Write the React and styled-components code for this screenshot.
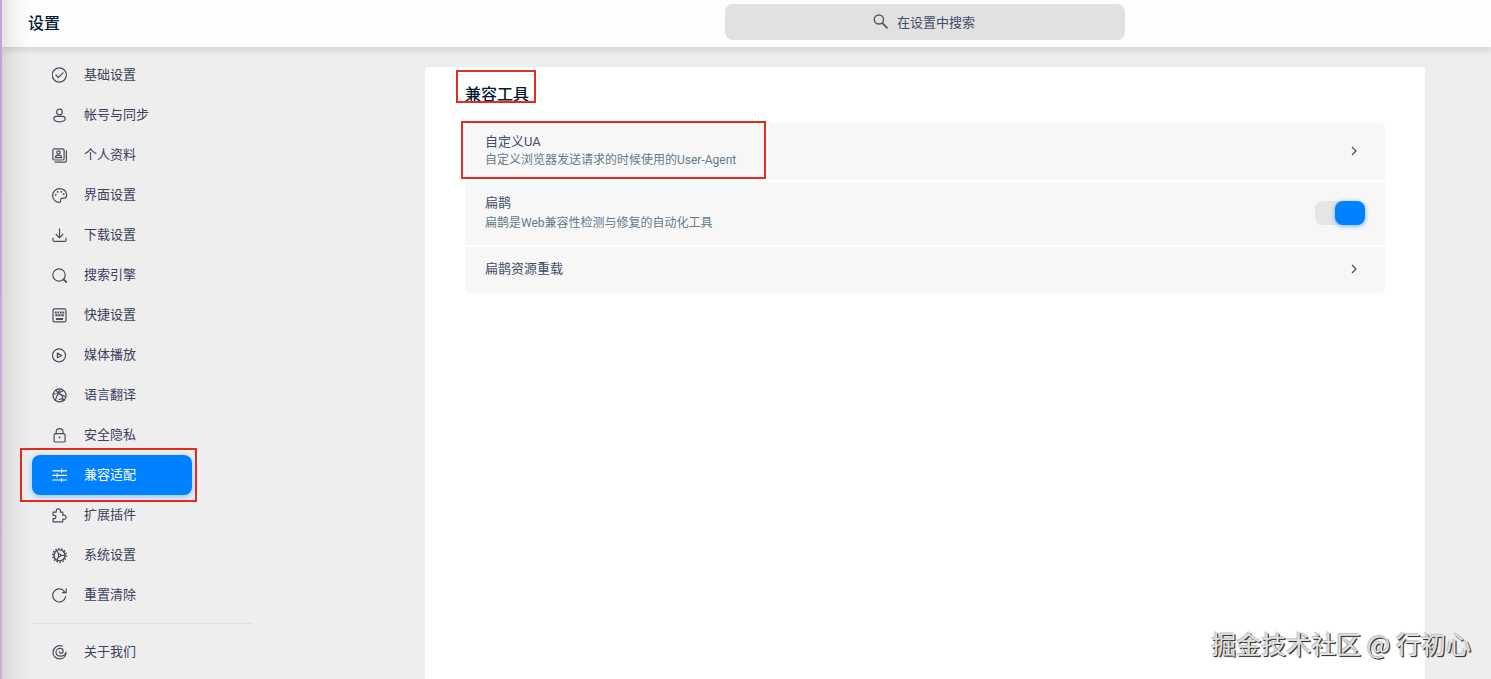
import React, { useState } from 'react'
import styled, { createGlobalStyle, ThemeProvider } from 'styled-components'

const theme = {
  fontFamily: 'Roboto, "Noto Sans CJK SC", sans-serif',
  colors: {
    page: '#eeeeee',
    header: '#fdfdfd',
    panel: '#ffffff',
    row: '#f7f7f7',
    search: '#e1e1e1',
    accent: '#0081ff',
    title: '#001a2e',
    text: '#414d68',
    nav: '#3b415b',
    icon: '#4a4e5c',
    hint: '#667a8a',
    mark: '#e32b20',
  },
}

const GlobalStyle = createGlobalStyle`
  * {
    box-sizing: border-box;
  }
  body {
    margin: 0;
    background-color: ${ theme.colors.page };
    font-family: ${ theme.fontFamily };
    font-size: 13px;
  }
  button, input {
    font-family: inherit;
    font-size: inherit;
  }
`

const StyledPage = styled.div`
  position: relative;
  display: flex;
  flex-direction: column;
  height: 100vh;
  overflow: hidden;
  border-left: 2px solid;
  border-image: linear-gradient( #c8a2da, #c9a6dc 50%, #d6abcd ) 1;
  &::before {
    content: '';
    position: absolute;
    z-index: 2;
    top: 0;
    bottom: 0;
    left: 0;
    width: 28px;
    background: linear-gradient( to right, rgba(0, 0, 0, 0.1), rgba(0, 0, 0, 0.04) 40%, transparent );
    pointer-events: none;
  }
`

const columns = `
  display: grid;
  grid-template-columns: 423px minmax(0, 1fr);
  padding-right: 66px;
`

const StyledHeader = styled.header`
  ${ columns }
  position: relative;
  z-index: 1;
  align-items: start;
  flex: none;
  height: 47px;
  background-color: ${ props => props.theme.colors.header };
  box-shadow: 0 4px 6px rgba(0, 0, 0, 0.1);
`

const StyledPageTitle = styled.h1`
  margin: 0;
  padding-left: 26px;
  font-size: 16px;
  font-weight: 500;
  line-height: 48px;
  color: ${ props => props.theme.colors.title };
`

const StyledSearch = styled.label`
  display: flex;
  align-items: center;
  justify-content: center;
  justify-self: center;
  gap: 8px;
  width: 100%;
  max-width: 400px;
  height: 36px;
  margin-top: 4px;
  border-radius: 8px;
  background-color: ${ props => props.theme.colors.search };
  color: #5c5c5c;
  cursor: text;
`

const StyledSearchInput = styled.input`
  width: 80px;
  padding: 0;
  border: none;
  outline: none;
  background-color: transparent;
  color: ${ props => props.theme.colors.text };
  &::placeholder {
    color: ${ props => props.theme.colors.text };
    opacity: 1;
  }
`

const StyledBody = styled.div`
  ${ columns }
  flex: 1;
  min-height: 0;
`

const StyledNav = styled.nav`
  display: flex;
  flex-direction: column;
  align-items: flex-start;
  padding: 8px 0 0 30px;
`

const StyledNavItem = styled.a`
  position: relative;
  display: flex;
  align-items: center;
  flex: none;
  gap: 16px;
  width: 160px;
  height: 40px;
  padding-left: 20px;
  border-radius: 8px;
  line-height: 20px;
  text-decoration: none;
  color: ${ props => props.$active ? '#ffffff' : props.theme.colors.nav };
  background-color: ${ props => props.$active ? props.theme.colors.accent : 'transparent' };
  box-shadow: ${ props => props.$active ? '0 2px 6px rgba(0, 129, 255, 0.4)' : 'none' };
  svg {
    color: ${ props => props.$active ? '#ffffff' : props.theme.colors.icon };
  }
`

const StyledDivider = styled.hr`
  width: 220px;
  margin: 8px 0;
  border: none;
  border-top: 1px solid #dfdfdf;
`

const StyledPanel = styled.main`
  margin-top: 20px;
  padding: 16px 40px;
  border-radius: 3px 3px 0 0;
  background-color: ${ props => props.theme.colors.panel };
`

const StyledSectionTitle = styled.h2`
  position: relative;
  width: fit-content;
  margin: 0 0 16px;
  font-size: 16px;
  font-weight: 500;
  line-height: 24px;
  color: ${ props => props.theme.colors.title };
`

const StyledList = styled.div`
  display: flex;
  flex-direction: column;
  gap: 2px;
`

const rowStyle = `
  display: flex;
  align-items: center;
  justify-content: space-between;
  width: 100%;
  padding: 0 20px 2px;
  border: none;
  text-align: left;
  cursor: pointer;
  &:first-child {
    border-radius: 6px 6px 0 0;
  }
  &:last-child {
    border-radius: 0 0 6px 6px;
  }
`

const StyledRowButton = styled.button`
  ${ rowStyle }
  min-height: ${ props => props.$compact ? '46px' : '57px' };
  background-color: ${ props => props.theme.colors.row };
`

const StyledRowLabel = styled.label`
  ${ rowStyle }
  min-height: 63px;
  background-color: ${ props => props.theme.colors.row };
`

const StyledRowText = styled.span`
  position: relative;
  display: flex;
  flex-direction: column;
  gap: ${ props => props.$loose ? '2px' : '0' };
`

const StyledRowName = styled.span`
  font-size: 13px;
  line-height: 18px;
  color: ${ props => props.theme.colors.text };
`

const StyledRowHint = styled.span`
  font-size: 12px;
  line-height: 18px;
  color: ${ props => props.theme.colors.hint };
`

const StyledSwitch = styled.input`
  appearance: none;
  display: flex;
  justify-content: flex-start;
  width: 50px;
  height: 24px;
  margin: 0;
  border-radius: 8px;
  background-color: #e5e5e5;
  cursor: pointer;
  &::before {
    content: '';
    width: 30px;
    height: 24px;
    border-radius: 8px;
    background-color: #ffffff;
    box-shadow: 0 1px 4px rgba(0, 0, 0, 0.3);
  }
  &:checked {
    justify-content: flex-end;
  }
  &:checked::before {
    background-color: ${ props => props.theme.colors.accent };
    box-shadow: 0 1px 4px rgba(0, 129, 255, 0.6);
  }
`

// red frame drawn over the part it surrounds
const StyledMark = styled.span`
  position: absolute;
  inset: ${ props => props.$inset };
  z-index: 1;
  border: 2px solid ${ props => props.theme.colors.mark };
  pointer-events: none;
`

const StyledWatermark = styled.div`
  position: absolute;
  right: 20px;
  bottom: 18px;
  z-index: 3;
  font-family: "Noto Sans CJK SC", sans-serif;
  font-size: 25px;
  line-height: 36px;
  white-space: nowrap;
  color: #e2e2e2;
  text-shadow: 1px 1px 1px #333333, 1px 1px 0 #555555, -1px -1px 1px #bcbcbc;
  pointer-events: none;
`

const StyledIcon = styled.svg`
  flex: none;
  fill: none;
  stroke: currentColor;
  stroke-width: 1.2;
  stroke-linecap: round;
  stroke-linejoin: round;
`

const icons = {
  check: (
    <>
      <circle cx='7.3' cy='8' r='7.1' />
      <path d='M3.9 8l2.5 2.6 4.6-4.8' />
    </>
  ),
  account: (
    <>
      <circle cx='7.5' cy='5' r='2.8' />
      <path d='M4.3 9.3h6.4c1.5 0 2.5 1 2.5 2.3 0 2-2.3 3.2-5.7 3.2s-5.7-1.2-5.7-3.2c0-1.3 1-2.3 2.5-2.3z' />
    </>
  ),
  profile: (
    <>
      <rect x='.9' y='1.8' width='11.2' height='11.2' rx='1.4' />
      <path d='M14.4 3.8v9.7c0 1-.7 1.7-1.7 1.7H3.2' />
      <circle cx='6.5' cy='5.5' r='1.7' />
      <path d='M3.4 10.7c0-3.4 6.2-3.4 6.2 0z' />
    </>
  ),
  palette: (
    <>
      <path d='M7.7 1.6C3.7 1.6.6 4.6.6 8.5c0 3.9 2.9 6.9 6.6 6.9 1.2 0 1.7-.7 1.5-1.7-.3-1.6.5-2.6 2.1-2.6h1.4c1.5 0 2.5-1.2 2.5-3 0-3.7-3.1-6.5-7-6.5z' />
      <g fill='currentColor' stroke='none'>
        <circle cx='3.7' cy='7.8' r='.9' />
        <circle cx='5.6' cy='4.9' r='.9' />
        <circle cx='9.3' cy='4.8' r='.9' />
        <circle cx='11.7' cy='7.2' r='.9' />
      </g>
    </>
  ),
  download: (
    <path d='M7.5 1.8v8.8M4.2 7.5l3.3 3.3 3.3-3.3M1 11.2v2c0 .7.5 1.2 1.2 1.2h10.6c.7 0 1.2-.5 1.2-1.2v-2' />
  ),
  search: (
    <>
      <circle cx='7' cy='8' r='6.2' />
      <path d='M11.6 12.5l2.6 2.4' strokeWidth='1.9' />
    </>
  ),
  keyboard: (
    <>
      <rect x='1' y='1.9' width='13' height='13' rx='1.5' />
      <path
        d='M2.8 5.6h2.1M5.6 5.6h1.7M8 5.6h1.7M10.3 5.6h2M3.3 8.3h2.4M6.3 8.3h2.3M9.3 8.3h2.5M3.9 11.9h7.2'
        strokeWidth='2'
        strokeLinecap='butt'
      />
    </>
  ),
  play: (
    <>
      <circle cx='7' cy='8.4' r='6.5' />
      <path d='M5.4 6v4.8L9.6 8.4z' />
    </>
  ),
  translate: (
    <>
      <circle cx='7.5' cy='8.4' r='6.5' />
      <path d='M4 3c.7 2.2 2.3 3.9 9.8 6.7M11.7 3.6C9 4 5.2 6.3 3.3 13.3M1.2 7.3c3.1-.2 5.4-1.2 7-5.2M9.7 7.7c1.1 2 1.2 4.3.6 6.5M7 12.5c2.3-.9 4.4-.4 5.5.6' />
    </>
  ),
  lock: (
    <>
      <rect x='2.1' y='6.7' width='11' height='8.3' rx='1.3' />
      <path d='M4.2 6.7V5c0-2 1.4-3.4 3.4-3.4S11 3 11 5v1.7' />
      <circle cx='7.6' cy='10.5' r='.9' fill='currentColor' stroke='none' />
    </>
  ),
  sliders: (
    <path d='M.9 3.8h7.6M10.6 3.8h4M9.6 2.3v3M.9 8.4h2.8M5.9 8.4h8.7M5 6.9v3M.9 13h7.6M10.6 13h4M9.6 11.5v3' />
  ),
  puzzle: (
    <path d='M1.1 5.1h3.2c-.5-2 .5-3.3 2-3.3s2.5 1.3 2 3.3h2.5v3.2c2-.5 3.3.5 3.3 2s-1.3 2.4-3.3 1.9v2.7H1.1v-3.3c1.8.3 2.8-.4 2.8-1.6s-1-1.9-2.8-1.6z' />
  ),
  gear: (
    <>
      <circle cx='7.5' cy='8.4' r='5.5' strokeWidth='1.4' />
      <circle cx='7.5' cy='8.4' r='6.7' strokeWidth='1.6' strokeDasharray='1.5 1.506' strokeLinecap='butt' />
      <circle cx='7.5' cy='8.4' r='1.2' />
      <path d='M8.8 8.4H13M6.8 7.2L4.7 3.7M6.8 9.6l-2.1 3.5' />
    </>
  ),
  reset: (
    <>
      <path d='M13.6 9.5A6.5 6.5 0 1 1 12.7 5' />
      <path d='M14.2 1.9v3.7h-3.7' />
    </>
  ),
  about: (
    <path d='M10.3 2.2C6.5.6 1 3.3 1 8.4c0 3.7 3 6.5 6.6 6.5 3.8 0 6.5-2.7 6.5-6.7-1 2.6-2.8 3.9-5.3 3.9-2.8 0-4.8-1.6-4.8-3.8 0-2.3 1.9-3.9 4.2-3.9 1.8 0 2.9 1.1 2.9 2.5s-1 2.4-2.2 2.4c-1 0-1.6-.6-1.5-1.4' />
  ),
}

const Icon = ({ name }) => (
  <StyledIcon width='16' height='16' viewBox='0 0 16 16' aria-hidden='true'>
    { icons[name] }
  </StyledIcon>
)

const SearchGlyph = () => (
  <StyledIcon width='16' height='16' viewBox='0 0 16 16' aria-hidden='true'>
    <circle cx='5.9' cy='5.5' r='4.6' strokeWidth='1.5' />
    <path d='M9.3 9l5.3 5.3' strokeWidth='1.8' strokeLinecap='butt' />
  </StyledIcon>
)

const Chevron = () => (
  <StyledIcon width='22' height='22' viewBox='0 0 22 22' aria-hidden='true' color='#444444'>
    <path d='M9 7l4 4-4 4' strokeWidth='1.1' strokeLinecap='butt' strokeLinejoin='miter' />
  </StyledIcon>
)

const navItems = [
  { id: 'basic', icon: 'check', label: '基础设置' },
  { id: 'account', icon: 'account', label: '帐号与同步' },
  { id: 'profile', icon: 'profile', label: '个人资料' },
  { id: 'appearance', icon: 'palette', label: '界面设置' },
  { id: 'download', icon: 'download', label: '下载设置' },
  { id: 'engine', icon: 'search', label: '搜索引擎' },
  { id: 'shortcut', icon: 'keyboard', label: '快捷设置' },
  { id: 'media', icon: 'play', label: '媒体播放' },
  { id: 'language', icon: 'translate', label: '语言翻译' },
  { id: 'privacy', icon: 'lock', label: '安全隐私' },
  { id: 'compat', icon: 'sliders', label: '兼容适配' },
  { id: 'extension', icon: 'puzzle', label: '扩展插件' },
  { id: 'system', icon: 'gear', label: '系统设置' },
  { id: 'reset', icon: 'reset', label: '重置清除' },
]

const App = () => {
  const [repair, setRepair] = useState(true)

  return (
    <ThemeProvider theme={ theme }>
      <GlobalStyle />
      <StyledPage>
        <StyledHeader>
          <StyledPageTitle>设置</StyledPageTitle>
          <StyledSearch htmlFor='search'>
            <SearchGlyph />
            <StyledSearchInput id='search' type='text' placeholder='在设置中搜索' />
          </StyledSearch>
        </StyledHeader>
        <StyledBody>
          <StyledNav>
            { navItems.map( item => (
              <StyledNavItem
                key={ item.id }
                href={ `#${ item.id }` }
                $active={ item.id === 'compat' }
              >
                <Icon name={ item.icon } />
                { item.label }
                { item.id === 'compat' && <StyledMark $inset='-7px -5px -7px -12px' /> }
              </StyledNavItem>
            ) ) }
            <StyledDivider />
            <StyledNavItem href='#about'>
              <Icon name='about' />
              关于我们
            </StyledNavItem>
          </StyledNav>
          <StyledPanel>
            <StyledSectionTitle>
              兼容工具
              <StyledMark $inset='-13px -7px 4px -9px' />
            </StyledSectionTitle>
            <StyledList>
              <StyledRowButton type='button'>
                <StyledRowText>
                  <StyledRowName>自定义UA</StyledRowName>
                  <StyledRowHint>自定义浏览器发送请求的时候使用的User-Agent</StyledRowHint>
                  <StyledMark $inset='-12px -30px -10px -24px' />
                </StyledRowText>
                <Chevron />
              </StyledRowButton>
              <StyledRowLabel htmlFor='repair'>
                <StyledRowText $loose>
                  <StyledRowName>扁鹊</StyledRowName>
                  <StyledRowHint>扁鹊是Web兼容性检测与修复的自动化工具</StyledRowHint>
                </StyledRowText>
                <StyledSwitch
                  id='repair'
                  type='checkbox'
                  checked={ repair }
                  onChange={ e => setRepair( e.target.checked ) }
                />
              </StyledRowLabel>
              <StyledRowButton type='button' $compact>
                <StyledRowText>
                  <StyledRowName>扁鹊资源重载</StyledRowName>
                </StyledRowText>
                <Chevron />
              </StyledRowButton>
            </StyledList>
          </StyledPanel>
        </StyledBody>
        <StyledWatermark>掘金技术社区 @ 行初心</StyledWatermark>
      </StyledPage>
    </ThemeProvider>
  )
}

export default App
